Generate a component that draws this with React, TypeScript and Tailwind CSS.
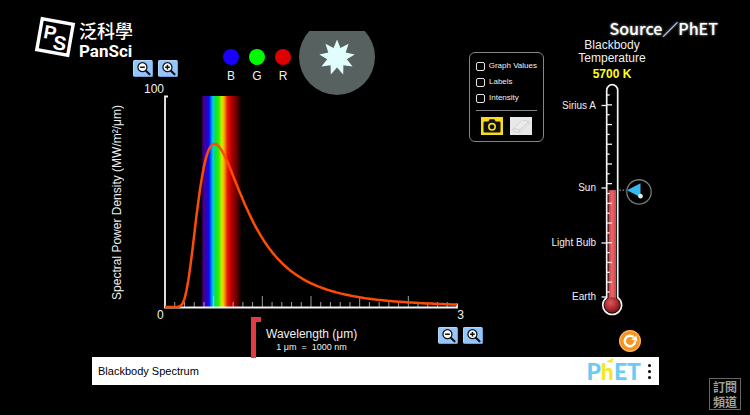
import { useState } from "react";

const AXIS_X = 2;
const AXIS_Y = 213;
const PLOT_W = 291;
const PLOT_H = 211;
const MAX_WAVELENGTH = 3;
const MAX_POWER = 100;

// Planck's law, wavelength in micrometres, result in MW/m²/µm
const planck = (wavelength: number, temperature: number) =>
  374.18 / (Math.pow(wavelength, 5) * (Math.exp(14388 / (wavelength * temperature)) - 1));

const curvePath = (temperature: number) => {
  let d = `M${AXIS_X} ${AXIS_Y}`;
  for (let i = 1; i <= 150; i++) {
    const wavelength = (i / 150) * MAX_WAVELENGTH;
    const x = AXIS_X + (wavelength / MAX_WAVELENGTH) * PLOT_W;
    const y = AXIS_Y - (planck(wavelength, temperature) / MAX_POWER) * PLOT_H;
    d += ` L${x.toFixed(1)} ${y.toFixed(1)}`;
  }
  return d;
};

const spectrum = [
  ["0", "#1c0038"],
  ["0.06", "#48008c"],
  ["0.12", "#3000b8"],
  ["0.19", "#0a10f0"],
  ["0.24", "#0070ff"],
  ["0.29", "#00d4e8"],
  ["0.34", "#00e050"],
  ["0.43", "#30ec00"],
  ["0.52", "#d8ec00"],
  ["0.58", "#f8a000"],
  ["0.66", "#ec1400"],
  ["0.76", "#b80000"],
  ["1", "#1c0000"],
];

const ZoomButton = ({ label, plus }: { label: string; plus?: boolean }) => (
  <button
    aria-label={label}
    className="flex h-[17px] w-5 items-center justify-center rounded-xs border border-[#b5d6fb] border-r-[#6f9fd6] border-b-[#6f9fd6] bg-[#94c5fb]"
  >
    <svg viewBox="0 0 14 14" className="size-[15px]" fill="none">
      <circle cx="6" cy="5.8" r="4.2" fill="#fff" stroke="#111" strokeWidth="1.2" />
      <path d="M9.2 9 12.6 12.4" stroke="#111" strokeWidth="2" strokeLinecap="round" />
      <path d="M3.8 5.8h4.4" stroke="#111" strokeWidth="1.4" />
      {plus && <path d="M6 3.6v4.4" stroke="#111" strokeWidth="1.4" />}
    </svg>
  </button>
);

const ColorDot = ({ label, color }: { label: string; color: string }) => (
  <div className="flex flex-col items-center gap-1">
    <span className={`size-4 rounded-full ${color}`} />
    <span className="text-[12px] leading-[14px]">{label}</span>
  </div>
);

const Star = () => {
  const points = [];
  for (let i = 0; i < 18; i++) {
    const r = i % 2 === 0 ? 18 : 10;
    const a = (i * Math.PI) / 9 - Math.PI / 2;
    points.push(`${(38 + r * Math.cos(a)).toFixed(1)},${(26.5 + r * Math.sin(a)).toFixed(1)}`);
  }
  return (
    <svg viewBox="0 0 76 64" className="h-16 w-[76px]">
      <circle cx="38" cy="26" r="38" fill="#566160" />
      <polygon points={points.join(" ")} fill="#e0fffc" />
    </svg>
  );
};

const Chart = ({ temperature }: { temperature: number }) => {
  const ticks = Array.from({ length: 29 }, (_, i) => i + 1);
  return (
    <svg viewBox="0 0 296 216" preserveAspectRatio="none" className="h-[216px] min-w-0 flex-1">
      <defs>
        <linearGradient id="spectrum">
          {spectrum.map(([offset, color]) => (
            <stop key={offset} offset={offset} stopColor={color} />
          ))}
        </linearGradient>
      </defs>
      <rect x="38.5" y="2" width="39" height="211" fill="url(#spectrum)" />
      {ticks.map((i) => (
        <path
          key={i}
          d={`M${AXIS_X + i * 9.7} ${AXIS_Y}v${i % 5 === 0 ? -11 : -5}`}
          stroke="#c4c4c4"
          strokeWidth="0.8"
        />
      ))}
      <path d="M5 2.5H2V213.5H293v-4" fill="none" stroke="#f2f2f2" strokeWidth="1.8" />
      <path d={curvePath(temperature)} fill="none" stroke="#ff4c05" strokeWidth="2.5" strokeLinejoin="round" />
    </svg>
  );
};

const Option = ({ label }: { label: string }) => (
  <label className="flex items-center gap-1 text-[8px] leading-[10px] whitespace-nowrap">
    <input
      type="checkbox"
      className="size-[9px] appearance-none rounded-xs border border-[#e5e5e5] bg-black checked:bg-white"
    />
    {label}
  </label>
);

const OptionsPanel = () => (
  <div className="mt-[52px] flex h-[90px] w-[75px] shrink-0 flex-col rounded-md border border-[#858585] px-[6px] pt-2">
    <div className="flex flex-col gap-[6px]">
      <Option label="Graph Values" />
      <Option label="Labels" />
      <Option label="Intensity" />
    </div>
    <hr className="mt-[7px] border-[#858585]" />
    <div className="mt-[6px] flex justify-center gap-[7px]">
      <button aria-label="Take snapshot" className="h-[18px] w-[22px] bg-[#f6dc1c]">
        <svg viewBox="0 0 22 18" className="size-full">
          <path d="M2.5 5.5q0-1 1-1h3.8l1.4-2.2h4.6l1.4 2.2h3.8q1 0 1 1V14.5q0 1-1 1h-15q-1 0-1-1z" fill="#111" />
          <circle cx="11" cy="9.8" r="3.2" fill="none" stroke="#f6dc1c" strokeWidth="1.6" />
        </svg>
      </button>
      <button aria-label="Erase snapshots" className="h-[18px] w-[22px] bg-[#e8e8e8]">
        <svg
          viewBox="0 0 22 18"
          className="size-full"
          fill="#ececec"
          stroke="#cdcdcd"
          strokeWidth="0.8"
          strokeLinejoin="round"
        >
          <path d="M3 11.5 12.5 3 19 4.5 9.5 13z" />
          <path d="M3 11.5 9.5 13v2.5L3 14z" />
          <path d="M9.5 13 19 4.5V7l-9.5 8.5z" />
        </svg>
      </button>
    </div>
  </div>
);

const landmarks = [
  { name: "Sirius A", y: 24.5 },
  { name: "Sun", y: 107 },
  { name: "Light Bulb", y: 162 },
  { name: "Earth", y: 216 },
];

const Thermometer = ({ temperature, onChange }: { temperature: number; onChange: (value: number) => void }) => {
  const level = 222 - temperature * 0.0198;
  const ticks = Array.from({ length: 21 }, (_, i) => i);
  return (
    <div className="relative h-[236px] w-[114px]">
      <svg viewBox="0 0 114 236" className="size-full">
        <defs>
          <radialGradient id="bulb" cx="0.4" cy="0.35" r="0.7">
            <stop offset="0" stopColor="#d85a5a" />
            <stop offset="0.5" stopColor="#b52f34" />
            <stop offset="1" stopColor="#6d1418" />
          </radialGradient>
          <linearGradient id="fluid">
            <stop offset="0" stopColor="#b83e42" />
            <stop offset="0.45" stopColor="#f06468" />
            <stop offset="1" stopColor="#c8484c" />
          </linearGradient>
        </defs>
        <path
          d="M61.7 216.5V9.2a5.5 5.5 0 0 1 11 0V216.5a9.4 9.4 0 1 1-11 0z"
          fill="#000"
          stroke="#f4f4f4"
          strokeWidth="1.7"
        />
        <rect x="63.5" y={level} width="7.5" height={220 - level} fill="url(#fluid)" />
        <circle cx="67.2" cy="224" r="7.8" fill="url(#bulb)" />
        {ticks.map((i) => (
          <path key={i} d={`M62 ${14 + i * 9.85}h${i % 2 ? 5 : 2.7}`} stroke="#f4f4f4" strokeWidth="1.3" />
        ))}
        {landmarks.map(({ name, y }) => (
          <g key={name}>
            <path d={`M56.5 ${y}h5`} stroke="#f4f4f4" strokeWidth="1.3" />
            <text x="51" y={y + 3} textAnchor="end" fontSize="10" fill="#f0f0f0">
              {name}
            </text>
          </g>
        ))}
        <path d={`M74.5 ${level}h7`} stroke="#aaa" strokeDasharray="1.5 1.5" />
        <path d={`M82 ${level}l13.5-7v14z`} fill="#37b9f1" />
        <circle cx="94" cy={level + 1.8} r="12.2" fill="none" stroke="#777" strokeWidth="1.3" />
        <circle cx="95.5" cy={level + 6} r="2.3" fill="#e8e8e8" />
      </svg>
      <input
        type="range"
        aria-label="Blackbody temperature"
        min="300"
        max="10000"
        step="50"
        value={temperature}
        onChange={(e) => onChange(Number(e.target.value))}
        className="absolute top-6 right-1 h-48 w-8 opacity-0 [direction:rtl] [writing-mode:vertical-lr]"
      />
    </div>
  );
};

const PhetLogo = () => (
  <a
    href="#phet"
    aria-label="PhET"
    className="relative flex font-['Lato',sans-serif] text-[23px] leading-6 font-black text-[#6ccbf2]"
  >
    P<span className="text-[#f8e71c]">h</span>ET
    <svg viewBox="0 0 8 6" className="absolute -top-px left-5 h-[6px] w-2">
      <path d="M0 3.6 7.5 0 6 5z" fill="#f8e71c" />
    </svg>
  </a>
);

const PanSciLogo = () => (
  <div className="absolute top-4 left-[34px] flex items-start gap-[3px]">
    <svg viewBox="0 0 42 42" className="size-[42px]">
      <g transform="rotate(10 21 21)" fontFamily="Liberation Sans, sans-serif" fontWeight="bold" fill="#fff">
        <rect x="5.3" y="5.3" width="31.4" height="31.4" fill="#000" stroke="#fff" strokeWidth="3.4" />
        <text x="9" y="24" fontSize="19">P</text>
        <text x="20" y="33" fontSize="20">S</text>
      </g>
    </svg>
    <div className="pt-1 text-white">
      <p className="font-['Noto_Sans_CJK_TC',sans-serif] text-[18px] leading-5 font-medium">泛科學</p>
      <p className="font-['Roboto',sans-serif] text-[17px] leading-[22px] font-bold">PanSci</p>
    </div>
  </div>
);

const App = () => {
  const [temperature, setTemperature] = useState(5700);

  return (
    <div className="relative min-h-screen bg-black pr-[91px] pl-[92px] font-['Liberation_Sans',Arial,sans-serif] text-[#f0f0f0]">
      <main className="flex">
        <section className="min-w-0 flex-1">
          <div className="flex">
            <div className="min-w-0 flex-1 pt-[31px]">
              <div className="flex h-[63px]">
                <div className="flex w-[86px] flex-col pt-[29px]">
                  <div className="flex justify-end gap-[5px]">
                    <ZoomButton label="Zoom out vertically" />
                    <ZoomButton label="Zoom in vertically" plus />
                  </div>
                  <span className="mt-[5px] mr-[14px] text-right text-[12px] leading-[14px]">100</span>
                </div>
                <div className="mt-[18px] ml-[45px] flex gap-[10px]">
                  <ColorDot label="B" color="bg-[#1a00ff]" />
                  <ColorDot label="G" color="bg-[#00fb00]" />
                  <ColorDot label="R" color="bg-[#dd0000]" />
                </div>
                <div className="ml-2">
                  <Star />
                </div>
              </div>
              <div className="mr-1 flex">
                <div className="flex w-[71px] items-center pl-[18px]">
                  <span className="rotate-180 text-[12px] leading-[14px] whitespace-nowrap [writing-mode:vertical-rl]">
                    Spectral Power Density (MW/m²/μm)
                  </span>
                </div>
                <Chart temperature={temperature} />
              </div>
              <div className="-mt-[2px] ml-[65px] flex justify-between text-[12px] leading-[14px]">
                <span>0</span>
                <span>3</span>
              </div>
            </div>
            <div className="mr-px ml-[5px]">
              <OptionsPanel />
            </div>
          </div>
          <div className="relative flex items-start justify-between pt-[5px] pr-[62px] pl-[174px]">
            <svg viewBox="0 0 10 41" className="absolute -top-[5px] left-[159px] h-[41px] w-[10px]">
              <path d="M0 0h10v5H5v36H0z" fill="#e03c42" />
            </svg>
            <div className="text-center">
              <p className="text-[12px] leading-[14px]">Wavelength (μm)</p>
              <p className="text-[9px] leading-3 whitespace-pre">1 μm  =  1000 nm</p>
            </div>
            <div className="flex gap-[5px]">
              <ZoomButton label="Zoom out horizontally" />
              <ZoomButton label="Zoom in horizontally" plus />
            </div>
          </div>
        </section>

        <section className="flex w-[114px] shrink-0 flex-col pt-[39px]">
          <div className="pl-5 text-center text-[12px] leading-[13px]">
            <h2>
              Blackbody
              <br />
              Temperature
            </h2>
            <p className="mt-[3px] font-bold text-[#ffff1a]">{temperature} K</p>
          </div>
          <Thermometer temperature={temperature} onChange={setTemperature} />
          <button
            aria-label="Reset all"
            onClick={() => setTemperature(5700)}
            className="mt-[13px] mb-[5px] ml-[74px] size-[22px] rounded-full bg-[#f7931e]"
          >
            <svg viewBox="0 0 22 22" className="size-full" fill="none">
              <circle cx="11" cy="11" r="10.3" stroke="#fbbd73" strokeWidth="1" />
              <path d="M14.6 7.2A5.2 5.2 0 1 0 16.2 11" stroke="#fff" strokeWidth="2.4" />
              <path d="M12.2 9.8 18.6 11 17.2 5.4z" fill="#fff" />
            </svg>
          </button>
        </section>
      </main>

      <footer className="flex h-7 items-center bg-white pr-2 pl-[6px] text-black">
        <h1 className="flex-1 text-[11px]">Blackbody Spectrum</h1>
        <PhetLogo />
        <button aria-label="Menu" className="ml-[7px] flex flex-col gap-[3px]">
          <span className="size-[3px] rounded-full bg-black" />
          <span className="size-[3px] rounded-full bg-black" />
          <span className="size-[3px] rounded-full bg-black" />
        </button>
      </footer>

      {/* channel overlays */}
      <PanSciLogo />
      <p className="absolute top-4 right-8 font-['Noto_Sans_CJK_TC',sans-serif] text-[16px] leading-6 font-medium text-white [text-shadow:0_0_3px_#777,0_0_2px_#777]">
        Source／PhET
      </p>
      <button className="absolute right-[9px] bottom-[5px] w-8 border border-[#666] bg-black text-center font-['Noto_Sans_CJK_TC',sans-serif] text-[12px] leading-[15px] font-bold text-[#a0a0a0]">
        訂閱
        <br />
        頻道
      </button>
    </div>
  );
};

export default App;
